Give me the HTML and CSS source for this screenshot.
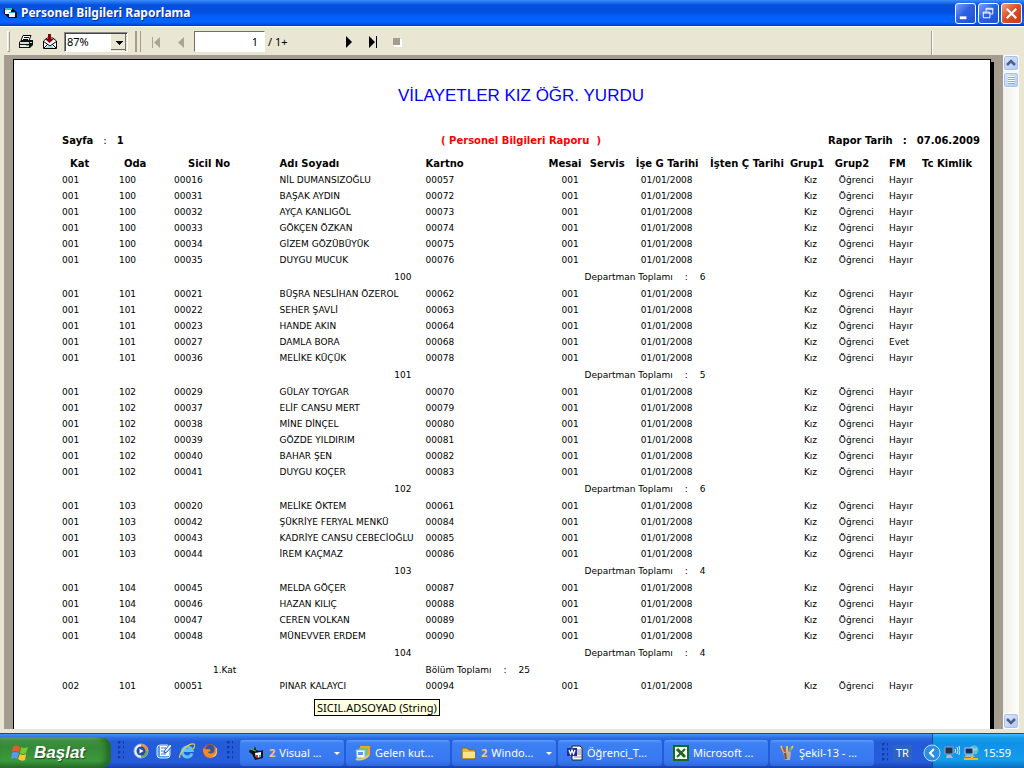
FILE: index.html
```html
<!DOCTYPE html>
<html lang="tr">
<head>
<meta charset="utf-8">
<title>Personel Bilgileri Raporlama</title>
<link rel="stylesheet" href="styles.css">
</head>
<body>
<header class="titlebar">
  <svg class="app-icon" viewBox="0 0 14 14" shape-rendering="crispEdges"><path d="M0 2h8l5 4v6H5L0 8z" fill="#111"/><path d="M1 4h6v4H1z" fill="#fff"/><path d="M1 2h7v2H1z" fill="#19c5d8"/><path d="M5 7h6v4H5z" fill="#f4f4f4"/><path d="M5 6h6v1H5z" fill="#2ad"/></svg>
  <h1 class="window-title">Personel Bilgileri Raporlama</h1>
  <div class="window-buttons">
    <button class="winbtn" aria-label="Simge durumuna küçült"><svg viewBox="0 0 20 20"><path d="M4 13h7v3H4z" fill="#fff"/></svg></button>
    <button class="winbtn" aria-label="Geri yükle"><svg viewBox="0 0 20 20" fill="none" stroke="#fff"><path d="M7.500 8V4.500h7v6H12M7 5.500h8"/><path d="M4.500 8.500h7v6h-7zM4 9.500h8"/></svg></button>
    <button class="winbtn winbtn-close" aria-label="Kapat"><svg viewBox="0 0 20 20"><path d="M5 5l10 10M15 5L5 15" stroke="#fff" stroke-width="2.400"/></svg></button>
  </div>
</header>

<div class="toolbar">
  <div class="tool-group">
    <span class="grip"></span>
    <button class="tool" aria-label="Yazdır"><svg width="16" height="16" viewBox="0 0 16 16"><path d="M5 1.500h8l-2 5H3z" fill="#fff" stroke="#000"/><path d="M6 3.500h5M5 5.500h5" stroke="#000"/><path d="M1 8l3-2h11v5l-3 3H1z" fill="#111"/><path d="M2 8h9v2H2zM12 8h2v1h-2z" fill="#ddd"/><path d="M2 11h9v2H2z" fill="#eee"/><path d="M8 11h3v1H8z" fill="#4c2"/></svg></button>
    <button class="tool" aria-label="Dışa aktar"><svg width="16" height="16" viewBox="0 0 16 16"><path d="M1.500 7L5 4h6l3.500 3v7.500h-13z" fill="#fff" stroke="#000"/><path d="M1.500 7.500L8 12l6.500-4.500M2 14l4-4M14 14l-4-4" fill="none" stroke="#000"/><path d="M5 12h6v2H4z" fill="#9de"/><path d="M6 0h3v5h3L7.500 9 3 5h3z" fill="#8b0010"/></svg></button>
    <select class="zoom" aria-label="Yakınlaştırma"><option>87%</option></select>
  </div>
  <div class="tool-group nav-group">
    <span class="grip grip-double"></span>
    <button class="tool" aria-label="İlk sayfa"><svg width="16" height="16" viewBox="0 0 16 16"><path d="M3 3h1v11H3zM11 3v11L5 8.500z" fill="#aaa595"/></svg></button>
    <button class="tool" aria-label="Önceki sayfa"><svg width="16" height="16" viewBox="0 0 16 16"><path d="M11 3v11L5 8.500z" fill="#aaa595"/></svg></button>
    <input class="page-no" type="text" value="1" aria-label="Sayfa">
    <span class="page-total">/ 1+</span>
    <button class="tool" aria-label="Sonraki sayfa"><svg width="16" height="16" viewBox="0 0 16 16"><path d="M5 2v12l6-6z"/></svg></button>
    <button class="tool" aria-label="Son sayfa"><svg width="16" height="16" viewBox="0 0 16 16"><path d="M4 2v12l6-6zM11 2h1v12h-1z"/></svg></button>
    <button class="tool" aria-label="Durdur"><svg width="16" height="16" viewBox="0 0 16 16"><path d="M5 5h8v8H5z" fill="#fff"/><path d="M4 4h7v7H4z" fill="#a49d8f"/></svg></button>
  </div>
  <span class="toolbar-end"></span>
</div>

<div class="workspace">
<main class="viewer">
<div class="sheet">
  <h2 class="report-title">VİLAYETLER KIZ ÖĞR. YURDU</h2>
  <div class="report-meta">
    <span class="meta-pair"><b>Sayfa</b><span>:</span><b>1</b></span>
    <strong class="report-name">( Personel Bilgileri Raporu &nbsp;)</strong>
    <span class="meta-pair meta-date"><b>Rapor Tarih</b><b>:</b><b>07.06.2009</b></span>
  </div>
  <table class="report">
    <colgroup><col class="c-kat"><col class="c-oda"><col class="c-sicil"><col class="c-ad"><col class="c-kart"><col class="c-mesai"><col class="c-servis"><col class="c-giris"><col class="c-cikis"><col class="c-grup1"><col class="c-grup2"><col class="c-fm"><col></colgroup>
    <thead><tr><th class="in-m">Kat<th class="in-s">Oda<th class="in-l">Sicil No<th>Adı Soyadı<th>Kartno<th>Mesai<th>Servis<th>İşe G Tarihi<th>İşten Ç Tarihi<th>Grup1<th>Grup2<th>FM<th>Tc Kimlik</tr></thead>
    <tbody>
    <tr><td>001<td>100<td>00016<td>NİL DUMANSIZOĞLU<td>00057<td>001<td><td>01/01/2008<td><td>Kız<td>Öğrenci<td>Hayır<td></tr>
    <tr><td>001<td>100<td>00031<td>BAŞAK AYDIN<td>00072<td>001<td><td>01/01/2008<td><td>Kız<td>Öğrenci<td>Hayır<td></tr>
    <tr><td>001<td>100<td>00032<td>AYÇA KANLIGÖL<td>00073<td>001<td><td>01/01/2008<td><td>Kız<td>Öğrenci<td>Hayır<td></tr>
    <tr><td>001<td>100<td>00033<td>GÖKÇEN ÖZKAN<td>00074<td>001<td><td>01/01/2008<td><td>Kız<td>Öğrenci<td>Hayır<td></tr>
    <tr><td>001<td>100<td>00034<td>GİZEM GÖZÜBÜYÜK<td>00075<td>001<td><td>01/01/2008<td><td>Kız<td>Öğrenci<td>Hayır<td></tr>
    <tr><td>001<td>100<td>00035<td>DUYGU MUCUK<td>00076<td>001<td><td>01/01/2008<td><td>Kız<td>Öğrenci<td>Hayır<td></tr>
    <tr class="subtotal"><td colspan="4" class="room">100<td><td colspan="8" class="dept"><span class="total"><span>Departman Toplamı</span><span>:</span><span>6</span></span></tr>
    </tbody>
    <tbody>
    <tr><td>001<td>101<td>00021<td>BÜŞRA NESLİHAN ÖZEROL<td>00062<td>001<td><td>01/01/2008<td><td>Kız<td>Öğrenci<td>Hayır<td></tr>
    <tr><td>001<td>101<td>00022<td>SEHER ŞAVLİ<td>00063<td>001<td><td>01/01/2008<td><td>Kız<td>Öğrenci<td>Hayır<td></tr>
    <tr><td>001<td>101<td>00023<td>HANDE AKIN<td>00064<td>001<td><td>01/01/2008<td><td>Kız<td>Öğrenci<td>Hayır<td></tr>
    <tr><td>001<td>101<td>00027<td>DAMLA BORA<td>00068<td>001<td><td>01/01/2008<td><td>Kız<td>Öğrenci<td>Evet<td></tr>
    <tr><td>001<td>101<td>00036<td>MELİKE KÜÇÜK<td>00078<td>001<td><td>01/01/2008<td><td>Kız<td>Öğrenci<td>Hayır<td></tr>
    <tr class="subtotal"><td colspan="4" class="room">101<td><td colspan="8" class="dept"><span class="total"><span>Departman Toplamı</span><span>:</span><span>5</span></span></tr>
    </tbody>
    <tbody>
    <tr><td>001<td>102<td>00029<td>GÜLAY TOYGAR<td>00070<td>001<td><td>01/01/2008<td><td>Kız<td>Öğrenci<td>Hayır<td></tr>
    <tr><td>001<td>102<td>00037<td>ELİF CANSU MERT<td>00079<td>001<td><td>01/01/2008<td><td>Kız<td>Öğrenci<td>Hayır<td></tr>
    <tr><td>001<td>102<td>00038<td>MİNE DİNÇEL<td>00080<td>001<td><td>01/01/2008<td><td>Kız<td>Öğrenci<td>Hayır<td></tr>
    <tr><td>001<td>102<td>00039<td>GÖZDE YILDIRIM<td>00081<td>001<td><td>01/01/2008<td><td>Kız<td>Öğrenci<td>Hayır<td></tr>
    <tr><td>001<td>102<td>00040<td>BAHAR ŞEN<td>00082<td>001<td><td>01/01/2008<td><td>Kız<td>Öğrenci<td>Hayır<td></tr>
    <tr><td>001<td>102<td>00041<td>DUYGU KOÇER<td>00083<td>001<td><td>01/01/2008<td><td>Kız<td>Öğrenci<td>Hayır<td></tr>
    <tr class="subtotal"><td colspan="4" class="room">102<td><td colspan="8" class="dept"><span class="total"><span>Departman Toplamı</span><span>:</span><span>6</span></span></tr>
    </tbody>
    <tbody>
    <tr><td>001<td>103<td>00020<td>MELİKE ÖKTEM<td>00061<td>001<td><td>01/01/2008<td><td>Kız<td>Öğrenci<td>Hayır<td></tr>
    <tr><td>001<td>103<td>00042<td>ŞÜKRİYE FERYAL MENKÜ<td>00084<td>001<td><td>01/01/2008<td><td>Kız<td>Öğrenci<td>Hayır<td></tr>
    <tr><td>001<td>103<td>00043<td>KADRİYE CANSU CEBECİOĞLU<td>00085<td>001<td><td>01/01/2008<td><td>Kız<td>Öğrenci<td>Hayır<td></tr>
    <tr><td>001<td>103<td>00044<td>İREM KAÇMAZ<td>00086<td>001<td><td>01/01/2008<td><td>Kız<td>Öğrenci<td>Hayır<td></tr>
    <tr class="subtotal"><td colspan="4" class="room">103<td><td colspan="8" class="dept"><span class="total"><span>Departman Toplamı</span><span>:</span><span>4</span></span></tr>
    </tbody>
    <tbody>
    <tr><td>001<td>104<td>00045<td>MELDA GÖÇER<td>00087<td>001<td><td>01/01/2008<td><td>Kız<td>Öğrenci<td>Hayır<td></tr>
    <tr><td>001<td>104<td>00046<td>HAZAN KILIÇ<td>00088<td>001<td><td>01/01/2008<td><td>Kız<td>Öğrenci<td>Hayır<td></tr>
    <tr><td>001<td>104<td>00047<td>CEREN VOLKAN<td>00089<td>001<td><td>01/01/2008<td><td>Kız<td>Öğrenci<td>Hayır<td></tr>
    <tr><td>001<td>104<td>00048<td>MÜNEVVER ERDEM<td>00090<td>001<td><td>01/01/2008<td><td>Kız<td>Öğrenci<td>Hayır<td></tr>
    <tr class="subtotal"><td colspan="4" class="room">104<td><td colspan="8" class="dept"><span class="total"><span>Departman Toplamı</span><span>:</span><span>4</span></span></tr>
    <tr class="floor-total"><td><td><td class="floor">1.Kat<td><td colspan="9"><span class="total"><span>Bölüm Toplamı</span><span>:</span><span>25</span></span></tr>
    </tbody>
    <tbody>
    <tr><td>002<td>101<td>00051<td>PINAR KALAYCI<td>00094<td>001<td><td>01/01/2008<td><td>Kız<td>Öğrenci<td>Hayır<td></tr>
    </tbody>
  </table>
  <div class="tooltip" role="tooltip">SICIL.ADSOYAD (String)</div>
</div>
</main>
<div class="scrollbar">
  <button class="scroll-btn" aria-label="Yukarı"><svg width="10" height="8" viewBox="0 0 10 8"><path d="M1 6l4-4 4 4" fill="none" stroke="#4d6185" stroke-width="2.500"/></svg></button>
  <div class="thumb"></div>
  <button class="scroll-btn scroll-down" aria-label="Aşağı"><svg width="10" height="8" viewBox="0 0 10 8"><path d="M1 2l4 4 4-4" fill="none" stroke="#4d6185" stroke-width="2.500"/></svg></button>
</div>
</div>

<footer class="taskbar">
  <button class="start"><svg width="20" height="20" viewBox="0 0 20 20"><path d="M3 4q3-3 7 0L9 9q-4-2-7 0z" fill="#f0582a"/><path d="M11 4q3 2 7 0l-2 6q-3 2-6 0z" fill="#7cc62e"/><path d="M2 10q3-2 7 0l-2 6q-3-2-6 0z" fill="#5a96f5"/><path d="M10 11q3 2 6 0l-1 6q-3 2-7-1z" fill="#fcc92c"/></svg><span>Başlat</span></button>
  <nav class="quick">
    <i class="dots"></i>
    <button class="ql" aria-label="Media Player"><svg width="16" height="16" viewBox="0 0 16 16"><circle cx="8" cy="8" r="7" fill="#eef3fb" stroke="#9bb6e0"/><path d="M8 1a7 7 0 0 1 7 7h-3a4 4 0 0 0-4-4z" fill="#f0912c"/><path d="M15 8a7 7 0 0 1-7 7v-3a4 4 0 0 0 4-4z" fill="#6aa84f"/><circle cx="8" cy="8" r="4.500" fill="#224bb0"/><path d="M6.500 5.500v5l4-2.500z" fill="#fff"/></svg></button>
    <button class="ql" aria-label="Masaüstünü göster"><svg width="16" height="16" viewBox="0 0 16 16"><rect x="1" y="2" width="13" height="13" rx="3" fill="#4fa0ee" stroke="#d4e8ff"/><path d="M4 3h9v10H4z" fill="#fff"/><path d="M5 5h5M5 8h3M5 11h5" stroke="#3977c8"/><path d="M8 10l1-3 5-6 2 2-5 6z" fill="#e8f2ff" stroke="#2858a8"/></svg></button>
    <button class="ql" aria-label="Internet Explorer"><svg width="16" height="16" viewBox="0 0 16 16"><path d="M13 10.500A5 5 0 1 1 13 7.500H4" fill="none" stroke="#5cc4fa" stroke-width="3"/><path d="M1 15C-1 11 9 0 15 1c2 1 0 4-1 5" fill="none" stroke="#f5c842" stroke-width="1.200"/></svg></button>
    <button class="ql" aria-label="Firefox"><svg width="16" height="16" viewBox="0 0 16 16"><circle cx="8" cy="8" r="7" fill="#e06018"/><circle cx="8" cy="6" r="4.500" fill="#3355a5"/><path d="M1 5q2 2 5 1 2 0 3 2l-3 1q1 3 6 1 2-3 0-7 4 3 3 7-2 5-7 5-7-1-7-10z" fill="#f58a1f"/><path d="M14 5q2 6-4 9 6 0 5-9z" fill="#fcd44a"/></svg></button>
    <i class="dots"></i>
  </nav>
  <nav class="tasks">
    <button class="task"><svg width="16" height="16" viewBox="0 0 16 16"><path d="M1 4l4 1 1-4 1 4 4 1 3-1v8l-8 2-3-6-3-2z" fill="#111"/><path d="M6 8l6-1v5l-5 1z" fill="#fff"/><path d="M1 4l6 2" stroke="#4c4"/><path d="M7 10h2v3H7z" fill="#d22"/><path d="M10 10h2v2h-2z" fill="#2bd"/></svg><b>2</b><span class="label">Visual ...</span><i class="arrow"></i></button>
    <button class="task"><svg width="16" height="16" viewBox="0 0 16 16"><path d="M5 1h10v9H5z" fill="#f3a52b"/><path d="M4 3h9v8H4z" fill="#7cc653"/><path d="M1 5h9v8H2z" fill="#f3faff" stroke="#78b6ec"/><path d="M3 7h5v3H3z" fill="#5a9be0"/><path d="M1 14q7 2 13-4" fill="none" stroke="#f2c75c" stroke-width="2"/></svg><span class="label">Gelen kut...</span></button>
    <button class="task"><svg width="16" height="16" viewBox="0 0 16 16"><path d="M1 3h5l2 2h6v9H1z" fill="#e8b93c" stroke="#8a6a14"/><path d="M2 7h12v6H2z" fill="#fbe38d"/></svg><b>2</b><span class="label">Windo...</span><i class="arrow"></i></button>
    <button class="task"><svg width="16" height="16" viewBox="0 0 16 16"><path d="M5 1h8l2 2v12H5z" fill="#fff" stroke="#222"/><path d="M10 5h4M10 7h4M10 9h4M7 12h7" stroke="#888"/><path d="M0 3h10v8H0z" fill="#1b2f9c"/><path d="M2 5l1.500 4L5 5l1.500 4L8 5" fill="none" stroke="#fff" stroke-width="1.300"/></svg><span class="label">Öğrenci_T...</span></button>
    <button class="task"><svg width="16" height="16" viewBox="0 0 16 16"><path d="M1 1h14v14H1z" fill="#fff" stroke="#176b1f" stroke-width="2"/><path d="M4 4l8 8" stroke="#176b1f" stroke-width="3"/><path d="M12 4l-8 8" stroke="#176b1f" stroke-width="2"/></svg><span class="label">Microsoft ...</span></button>
    <button class="task"><svg width="16" height="16" viewBox="0 0 16 16"><path d="M5 7L2 1M8 7V1M10 7l4-6" stroke="#e6c14e" stroke-width="2"/><path d="M6 7L4 2" stroke="#d84a32" stroke-width="2"/><path d="M10 7l2-4" stroke="#6ab04c" stroke-width="2"/><path d="M4 7h8l-1 8H6z" fill="#b9aea0"/><path d="M6 8l1 6" stroke="#7a4a32" stroke-width="2"/></svg><span class="label">Şekil-13 - ...</span></button>
  </nav>
  <div class="lang"><i class="dots"></i><span class="lang-code">TR</span></div>
  <div class="tray">
    <button class="tray-toggle" aria-label="Gizli simgeler"><svg width="18" height="18" viewBox="0 0 18 18"><circle cx="9" cy="9" r="8" fill="#2a8de8" stroke="#b9defc"/><path d="M11 5L7 9l4 4" fill="none" stroke="#fff" stroke-width="2"/></svg></button>
    <svg width="16" height="16" viewBox="0 0 16 16"><path d="M1 2h8v7H1z" fill="#25324e" stroke="#9aa4b8"/><path d="M3 10h4l2 3H2z" fill="#b5b5b5"/><path d="M11 4q1 2 0 4M13 2q2 4 0 7M15 1q2 5 0 9" fill="none" stroke="#dfe9f5"/></svg>
    <svg width="16" height="16" viewBox="0 0 16 16"><circle cx="11" cy="5" r="4.500" fill="#57c2d4"/><path d="M8 3q3 3 6 1" stroke="#b9f0a0" fill="none"/><path d="M2 3h8v6H2z" fill="#1c2870" stroke="#c5cbdc"/><path d="M3 10h7l2 2H1z" fill="#aeb4c8"/><path d="M1 14h14M9 11v3" stroke="#f2b52c" stroke-width="2"/></svg>
    <time class="clock">15:59</time>
  </div>
</footer>
</body>
</html>
```
FILE: styles.css
```css
* { box-sizing: border-box; }
body {
  margin: 0;
  height: 100vh;
  display: flex;
  flex-direction: column;
  overflow: hidden;
  background: #e9e7d3;
  font: 11px/14px "Noto Sans", "Open Sans", sans-serif;
  color: #000;
}
button { font: inherit; border: 0; padding: 0; background: none; }
svg { display: block; flex: none; }

/* window caption */
.titlebar {
  flex: none;
  display: flex;
  align-items: center;
  height: 27px;
  padding: 0 2px 0 4px;
  border-bottom: 1px solid #fff;
  background: linear-gradient(#3c8cf8 0, #2476f4 2px, #0550dc 5px, #0350e0 12px, #0260fa 17px, #0365ff 22px, #0248d0 25px, #0236b0 100%);
}
.app-icon { width: 14px; height: 14px; }
.window-title {
  flex: 1;
  margin: 0 0 0 3px;
  color: #fff;
  font-size: 12px;
  line-height: 16px;
  text-shadow: 1px 1px 0 #0a2c8c;
}
.window-buttons { display: flex; gap: 2px; }
.winbtn {
  width: 21px;
  height: 21px;
  border: 1px solid #fff;
  border-radius: 3px;
  background: linear-gradient(135deg, #7ba4f5, #2c62e4 45%, #1d4fd8);
}
.winbtn-close { background: linear-gradient(135deg, #f0a08a, #de4f28 45%, #c93a10); }

/* viewer toolbar */
.toolbar { flex: none; display: flex; height: 28px; padding: 4px 22px 0 7px; }
.tool-group { display: flex; align-items: center; height: 21px; gap: 8px; }
.nav-group { flex: 1; margin-left: 7px; }
.grip { width: 3px; height: 21px; border: 1px solid; border-color: #fff #a49d8f #a49d8f #fff; }
.grip-double { width: 6px; border-width: 0 1px 0 2px; border-left-color: #a49d8f; }
.tool { width: 16px; height: 16px; }
.zoom {
  width: 64px;
  height: 20px;
  margin-left: -2px;
  padding: 0 2px;
  border: 1px solid;
  border-color: #888 #fff #fff #888;
  border-radius: 0;
  box-shadow: inset 1px 1px 0 #444;
  appearance: none;
  font: inherit;
  color: #000;
  background:
    linear-gradient(#000, #000) 51px 8px / 7px 1px no-repeat,
    linear-gradient(#000, #000) 52px 9px / 5px 1px no-repeat,
    linear-gradient(#000, #000) 53px 10px / 3px 1px no-repeat,
    linear-gradient(#000, #000) 54px 11px / 1px 1px no-repeat,
    linear-gradient(#716f64, #716f64) right 1px top 0 / 1px 18px no-repeat,
    linear-gradient(#716f64, #716f64) right 1px bottom 1px / 15px 1px no-repeat,
    linear-gradient(#e9e7d3, #e9e7d3) right 0 top 1px / 16px 17px no-repeat,
    #fff;
}
.page-no {
  width: 71px;
  height: 21px;
  margin-left: -3px;
  padding: 0 6px;
  border: 1px solid;
  border-color: #716f64 #fff #fff #716f64;
  font: inherit;
  text-align: right;
}
.page-total { width: 65px; margin-left: -5px; }
.toolbar-end { width: 71px; border-left: 1px solid #a49d8f; box-shadow: inset 1px 0 0 #fff; }

/* document area */
.workspace {
  flex: 1;
  min-height: 0;
  display: flex;
  margin: 0 2px 0 4px;
  padding-right: 3px;
  border-bottom: 4px solid #e9e7d3;
}
.viewer { flex: 1; overflow: hidden; padding: 4px 12px 0 9px; background: #a49d8f; }
.sheet {
  position: relative;
  min-height: 100%;
  padding: 25px 10px 0 48px;
  border: 1px solid #000;
  border-bottom: 0;
  box-shadow: 3px 3px 0 #000;
  background: #fff;
  font-family: "DejaVu Sans", sans-serif;
  font-size: 9px;
  line-height: 12px;
}
.report-title {
  margin: 0;
  text-align: center;
  font: 17px/22px "Liberation Sans", Arial, sans-serif;
  color: #00f;
}
.report-meta {
  display: grid;
  grid-template-columns: 1fr auto 1fr;
  margin-top: 27px;
  font-size: 10px;
  line-height: 14px;
}
.report-name { color: #f00; }
.meta-pair { display: flex; gap: 10px; }
.meta-date { justify-content: flex-end; }
.report { width: 100%; margin-top: 8px; border-collapse: collapse; table-layout: fixed; }
.report th, .report td { height: 16px; padding: 0; text-align: left; white-space: nowrap; }
.report th { font-size: 10px; }
.c-kat { width: 6.2%; }
.c-oda { width: 6%; }
.c-sicil { width: 11.5%; }
.c-ad { width: 15.9%; }
.c-kart { width: 13.4%; }
.c-mesai { width: 4.5%; }
.c-servis { width: 5%; }
.c-giris { width: 8.1%; }
.c-cikis { width: 8.7%; }
.c-grup1 { width: 4.9%; }
.c-grup2 { width: 5.9%; }
.c-fm { width: 3.6%; }
.report .in-s { padding-left: 5px; }
.report .in-m { padding-left: 8px; }
.report .in-l { padding-left: 14px; }
.report td:nth-child(6) { padding-left: 13px; }
.report td:nth-child(8) { padding-left: 5px; }
.report td:nth-child(10) { padding-left: 14px; }
.report td:nth-child(11) { padding-left: 4px; }
.report .subtotal td { height: 18px; }
.report .room { padding-right: 14px; text-align: right; }
.report .subtotal .dept { padding-left: 36px; }
.report .floor { padding-left: 39px; }
.total { display: flex; gap: 12px; }
.tooltip {
  position: absolute;
  left: 300px;
  bottom: 13px;
  padding: 0 2px;
  border: 1px solid #000;
  background: #ffffe1;
  font: 11px/15px "Noto Sans", sans-serif;
}

/* scroll bar */
.scrollbar {
  flex: none;
  width: 16px;
  display: flex;
  flex-direction: column;
  gap: 1px;
  background: linear-gradient(90deg, #efeee8, #fefefb);
}
.scroll-btn, .thumb {
  height: 16px;
  border: 1px solid #fff;
  border-radius: 3px;
  box-shadow: inset 0 0 0 1px #a9bff0;
  background: linear-gradient(135deg, #dce7ff, #b2c9f8);
}
.scroll-btn, .thumb { display: grid; place-items: center; }
.scroll-down { margin-top: auto; }
.thumb::before {
  content: "";
  width: 7px;
  height: 8px;
  background: repeating-linear-gradient(#f4f8ff 0 1px, #8fabe8 1px 2px);
}

/* taskbar */
.taskbar {
  flex: none;
  display: flex;
  height: 35px;
  border-top: 1px solid #1a42a8;
  background: linear-gradient(#4592f2 0, #2c6ce4 4px, #245bd8 8px, #245cdc 28px, #1a3fa8 100%);
  color: #fff;
}
.start {
  display: flex;
  align-items: center;
  gap: 4px;
  width: 111px;
  margin-top: 3px;
  padding-left: 10px;
  border-radius: 0 10px 10px 0;
  background: linear-gradient(#7cbc78 0, #3f9440 4px, #378a37 10px, #3b9a3c 24px, #2a6e2c 100%);
  box-shadow: inset -5px 0 6px #246626;
  color: #fff;
  font: italic bold 17px/22px "Liberation Sans", sans-serif;
  text-shadow: 1px 1px 1px #1c4c1c;
}
.quick { display: flex; align-items: center; width: 129px; padding-left: 7px; gap: 7px; }
.ql { width: 16px; height: 16px; }
.dots {
  width: 6px;
  height: 20px;
  background:
    radial-gradient(circle at 1px 1px, #123a9c 1px, transparent 2px) 0 0 / 5px 5px;
}
.quick .dots:first-child { margin-right: 2px; }
.quick .dots:last-child { margin-left: 2px; }
.tasks { flex: 1; display: flex; gap: 2px; min-width: 0; padding: 6px 0 2px; }
.task {
  flex: 0 1 104px;
  display: flex;
  align-items: center;
  gap: 4px;
  min-width: 0;
  padding: 0 4px 0 9px;
  border-radius: 3px;
  background: linear-gradient(#5f9dfa 0, #3c80f4 3px, #3878f0 20px, #2f68dc 100%);
  color: #fff;
}
.task b { color: #fcc478; }
.label { flex: 1; text-align: left; white-space: nowrap; }
.arrow { border: 3px solid transparent; border-top-color: #fff; border-bottom: 0; }
.lang { display: flex; align-items: center; width: 50px; padding-top: 4px; gap: 5px; }
.lang-code { padding: 1px 3px; background: #2f63c0; }
.tray {
  display: flex;
  align-items: center;
  gap: 3px;
  width: 92px;
  padding-top: 4px;
  border-left: 1px solid #0b4f9e;
  background: linear-gradient(#3fbdf8 0, #139ce8 4px, #1290e8 10px, #129cec 26px, #0c6cc0 100%);
}
.tray-toggle { margin-left: -10px; }
.clock { margin-left: 1px; }
```
